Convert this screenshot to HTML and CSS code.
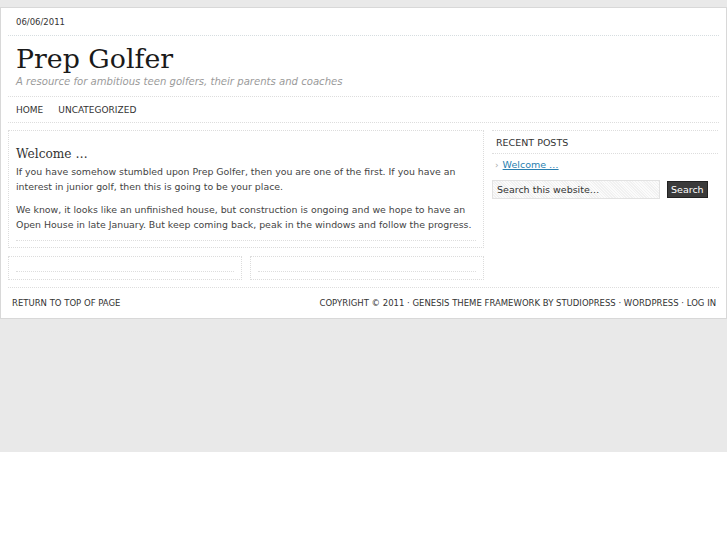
FILE: index.html
```html
<!DOCTYPE html>
<html>
<head>
<meta charset="utf-8">
<title>Prep Golfer</title>
<link rel="stylesheet" href="styles.css">
</head>
<body>
<div class="wrap">
  <div class="topbar"><span class="date">06/06/2011</span></div>
  <div class="header">
    <h1 class="title">Prep Golfer</h1>
    <p class="tagline">A resource for ambitious teen golfers, their parents and coaches</p>
  </div>
  <div class="nav">
    <a href="#">HOME</a>
    <a href="#">UNCATEGORIZED</a>
  </div>
  <div class="inner">
    <div class="content">
      <div class="post">
        <h2 class="post-title">Welcome …</h2>
        <p>If you have somehow stumbled upon Prep Golfer, then you are one of the first. If you have an interest in junior golf, then this is going to be your place.</p>
        <p>We know, it looks like an unfinished house, but construction is ongoing and we hope to have an Open House in late January. But keep coming back, peak in the windows and follow the progress.</p>
        <div class="post-meta"></div>
      </div>
      <div class="bottom-widgets">
        <div class="bw"><div class="bw-line"></div></div>
        <div class="bw"><div class="bw-line"></div></div>
      </div>
    </div>
    <div class="sidebar">
      <h4 class="widget-title">RECENT POSTS</h4>
      <ul class="recent">
        <li><a href="#">Welcome …</a></li>
      </ul>
      <form class="search">
        <input class="search-input" type="text" value="Search this website…">
        <button class="search-btn" type="button">Search</button>
      </form>
    </div>
  </div>
  <div class="footer">
    <a href="#">RETURN TO TOP OF PAGE</a>
    <span class="credits">COPYRIGHT © 2011 · GENESIS THEME FRAMEWORK BY STUDIOPRESS · WORDPRESS · LOG IN</span>
  </div>
</div>
</body>
</html>
```

FILE: styles.css
```css
html { background: #fff; }
body {
  margin: 0;
  height: 452px;
  background: #e9e9e9;
  font-family: "DejaVu Sans", Verdana, sans-serif;
  color: #333;
}
.wrap {
  margin-top: 7px;
  background: #fff;
  border: 1px solid #d8d8d8;
  padding: 0 7px 0 7px;
}
.topbar {
  height: 27px;
  display: flex;
  align-items: center;
  padding-left: 8px;
  border-bottom: 1px dotted #d6dde0;
}
.date { font-size: 8.5px; color: #333; }
.header {
  padding: 8px 8px 0 8px;
  height: 52px;
  border-bottom: 1px dotted #ddd;
}
.title {
  margin: 0;
  font-family: "DejaVu Serif", Georgia, serif;
  font-weight: normal;
  font-size: 26.8px;
  line-height: 30px;
  color: #1a1a1a;
}
.tagline {
  margin: 2px 0 0;
  font-size: 10.1px;
  font-style: italic;
  color: #9a9a9a;
}
.nav {
  height: 25px;
  display: flex;
  align-items: center;
  gap: 15px;
  padding-left: 8px;
  border-bottom: 1px dotted #ddd;
}
.nav a { font-size: 9px; color: #333; text-decoration: none; }
.inner {
  display: flex;
  gap: 8px;
  padding-top: 7px;
}
.content { width: 476px; }
.post {
  border: 1px dotted #dcdcdc;
  padding: 15px 7px 0 7px;
  height: 101px;
}
.post-title {
  margin: 0 0 1px;
  font-family: "DejaVu Serif", Georgia, serif;
  font-weight: normal;
  font-size: 12.2px;
  line-height: 17px;
  color: #333;
}
.post p {
  margin: 0 0 8px;
  font-size: 9.4px;
  line-height: 15px;
  color: #444;
}
.post-meta { border-bottom: 1px dotted #ddd; margin-top: 8px; }
.bottom-widgets {
  display: flex;
  gap: 8px;
  margin-top: 8px;
}
.bw {
  flex: 1;
  height: 22px;
  border: 1px dotted #dcdcdc;
  padding: 0 7px;
}
.bw-line { height: 14px; border-bottom: 1px dotted #ddd; }
.sidebar { width: 226px; }
.widget-title {
  margin: 0;
  font-weight: normal;
  font-size: 9.5px;
  color: #333;
  padding: 5px 4px 0;
  height: 17px;
  border-top: 1px dotted #ddd;
  border-bottom: 1px dotted #ddd;
  line-height: 14px;
}
.recent { list-style: none; margin: 4px 0 0; padding: 0 0 0 3px; }
.recent li { font-size: 9.5px; line-height: 14px; }
.recent li::before { content: "›"; color: #aaa; font-size: 9px; margin-right: 4px; }
.recent a { color: #2a7fb0; }
.search { display: flex; align-items: center; gap: 7px; margin-top: 8px; }
.search-input {
  width: 168px;
  height: 19px;
  box-sizing: border-box;
  border: 1px solid #e2e2e2;
  background: repeating-linear-gradient(45deg, #f1f1f1 0 1px, #fbfbfb 1px 2px);
  font-family: "DejaVu Sans", sans-serif;
  font-size: 9.5px;
  color: #333;
  padding: 0 4px;
}
.search-btn {
  height: 17px;
  background: #3a3a3a;
  color: #fff;
  border: 1px solid #222;
  font-family: "DejaVu Sans", sans-serif;
  font-size: 9.5px;
  padding: 0 3px;
}
.footer {
  margin-top: 7px;
  border-top: 1px dotted #ddd;
  height: 30px;
  display: flex;
  align-items: center;
  justify-content: space-between;
  padding: 0 3px 0 4px;
}
.footer a, .credits { font-size: 8.5px; color: #333; text-decoration: none; }
```
